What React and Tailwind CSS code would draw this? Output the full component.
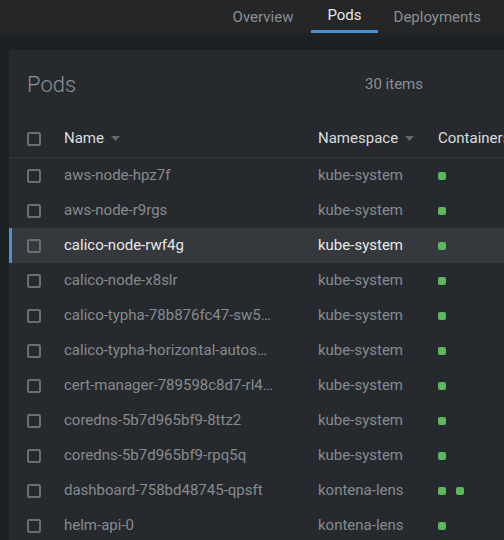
import React from 'react';

const pods = [
  { name: 'aws-node-hpz7f', ns: 'kube-system', containers: 1 },
  { name: 'aws-node-r9rgs', ns: 'kube-system', containers: 1 },
  { name: 'calico-node-rwf4g', ns: 'kube-system', containers: 1, active: true },
  { name: 'calico-node-x8slr', ns: 'kube-system', containers: 1 },
  { name: 'calico-typha-78b876fc47-sw5xq', ns: 'kube-system', containers: 1 },
  { name: 'calico-typha-horizontal-autoscaler-5d8f', ns: 'kube-system', containers: 1 },
  { name: 'cert-manager-789598c8d7-rl4kz', ns: 'kube-system', containers: 1 },
  { name: 'coredns-5b7d965bf9-8ttz2', ns: 'kube-system', containers: 1 },
  { name: 'coredns-5b7d965bf9-rpq5q', ns: 'kube-system', containers: 1 },
  { name: 'dashboard-758bd48745-qpsft', ns: 'kontena-lens', containers: 2 },
  { name: 'helm-api-0', ns: 'kontena-lens', containers: 1 },
];

function Checkbox() {
  return <div className="h-[14px] w-[14px] rounded-[2px] border-2 border-[#6a6f75]" />;
}

function SortArrow() {
  return (
    <svg width="9" height="5" viewBox="0 0 9 5" className="ml-[7px]">
      <path d="M0 0 L9 0 L4.5 5 Z" fill="#62676c" />
    </svg>
  );
}

export default function App() {
  return (
    <div
      className="h-[540px] w-[504px] overflow-hidden bg-[#1e2124] text-[15px]"
      style={{ fontFamily: 'Roboto, "Liberation Sans", sans-serif' }}
    >
      {/* Tabs */}
      <div className="flex h-[33px] justify-end bg-[#252628] pr-[7px]">
        <div className="flex h-full items-center px-4 pt-[1px] text-[#8b8f94]">Overview</div>
        <div className="ml-[2px] flex h-full flex-col items-stretch text-[#e6e6e6]">
          <div className="flex flex-1 items-center px-4 pt-[1px]">Pods</div>
          <div className="h-[3px] bg-[#4a8fd3]" />
        </div>
        <div className="flex h-full items-center px-4 pt-[1px] text-[#8b8f94]">Deployments</div>
      </div>

      {/* Panel */}
      <div className="ml-[9px] mt-[17px] h-full bg-[#262a2e]">
        <div className="flex h-[68px] items-center pl-[18px]">
          <div className="w-[338px] shrink-0 text-[22px] font-light text-[#8b9095]">Pods</div>
          <div className="text-[#8b9095]">30 items</div>
        </div>

        <div className="flex h-[40px] items-center border-b border-[#33373b] pl-[18px] pt-[2px] text-[#dadcde]">
          <div className="w-[37px] shrink-0"><Checkbox /></div>
          <div className="flex w-[254px] shrink-0 items-center">Name<SortArrow /></div>
          <div className="flex w-[120px] shrink-0 items-center">Namespace<SortArrow /></div>
          <div className="whitespace-nowrap">Containers</div>
        </div>

        {pods.map((p) => (
          <div
            key={p.name}
            className={
              p.active
                ? 'flex h-[35px] items-center border-l-[3px] border-[#4a8fd3] bg-[#35383c] pl-[15px] text-[#e8e8e8]'
                : 'flex h-[35px] items-center pl-[18px] text-[#868a8f]'
            }
          >
            <div className="w-[37px] shrink-0"><Checkbox /></div>
            <div className="w-[254px] shrink-0 truncate pr-[44px]">{p.name}</div>
            <div className="w-[120px] shrink-0 truncate">{p.ns}</div>
            <div className="flex gap-[10px]">
              {Array.from({ length: p.containers }).map((_, i) => (
                <div key={i} className="h-[8px] w-[8px] rounded-[2px] bg-[#5cb85c]" />
              ))}
            </div>
          </div>
        ))}
      </div>
    </div>
  );
}
